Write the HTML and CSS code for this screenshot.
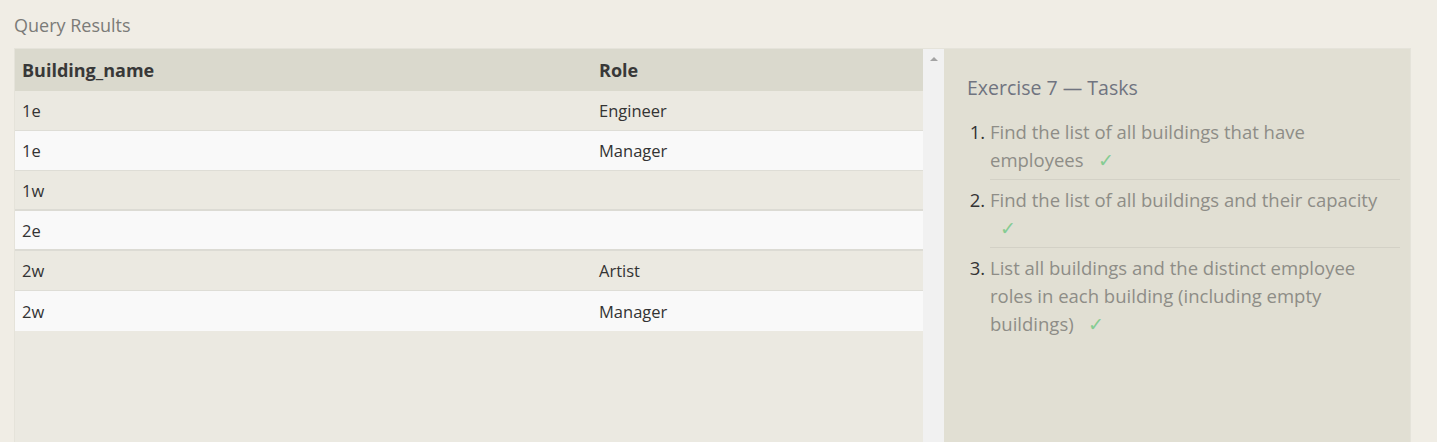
FILE: index.html
```html
<!DOCTYPE html>
<html>
<head>
<meta charset="utf-8">
<link rel="stylesheet" href="styles.css">
</head>
<body>
<div class="page">
  <div class="heading">Query Results</div>
  <div class="results">
    <div class="table-area">
      <table class="grid">
        <thead>
          <tr><th class="c1">Building_name</th><th>Role</th></tr>
        </thead>
        <tbody>
          <tr class="odd"><td>1e</td><td>Engineer</td></tr>
          <tr class="even"><td>1e</td><td>Manager</td></tr>
          <tr class="odd thick"><td>1w</td><td></td></tr>
          <tr class="even thick"><td>2e</td><td></td></tr>
          <tr class="odd"><td>2w</td><td>Artist</td></tr>
          <tr class="even last"><td>2w</td><td>Manager</td></tr>
        </tbody>
      </table>
      <div class="scrollbar"><span class="arrow"></span></div>
    </div>
    <div class="tasks">
      <div class="tasks-title">Exercise 7 — Tasks</div>
      <ol class="task-list">
        <li>Find the list of all buildings that have employees <span class="check">✓</span></li>
        <li>Find the list of all buildings and their capacity <span class="check">✓</span></li>
        <li>List all buildings and the distinct employee roles in each building (including empty buildings) <span class="check">✓</span></li>
      </ol>
    </div>
  </div>
</div>
</body>
</html>
```
FILE: styles.css
```css
html, body {
  margin: 0;
  padding: 0;
  background: #f0ede5;
  height: 100%;
  overflow: hidden;
}
.page {
  padding: 13px 26px 0 14px;
  font-family: "Open Sans", "Noto Sans", sans-serif;
}
.heading {
  font-size: 18px;
  line-height: 24px;
  color: #7b7b78;
  height: 35px;
}
.results {
  display: flex;
  border: 1px solid #e5e3da;
  border-bottom: none;
  height: 393px;
}
.table-area {
  display: flex;
  width: 929px;
  background: #ebe9e1;
}
.grid {
  width: 908px;
  border-collapse: collapse;
  align-self: flex-start;
  font-size: 16.5px;
  color: #333;
}
.grid th {
  background: #dad9cd;
  text-align: left;
  font-weight: 700;
  font-size: 18px;
  height: 42px;
  padding: 0 7px;
  color: #383838;
}
.grid th.c1 {
  width: 563px;
}
.grid td {
  height: 39px;
  padding: 0 7px;
  border-bottom: 1px solid #deddd6;
}
.grid tr.odd td { background: #ebe9e1; }
.grid tr.even td { background: #f9f9f9; }
.grid tr.thick td { border-bottom: 2px solid #dcdbd4; height: 38px; }
.grid tr.last td { border-bottom: none; height: 40px; }
.scrollbar {
  width: 21px;
  background: #f1f1f1;
  display: flex;
  justify-content: center;
  padding-top: 8px;
  box-sizing: border-box;
}
.arrow {
  width: 0;
  height: 0;
  border-left: 4px solid transparent;
  border-right: 4px solid transparent;
  border-bottom: 4px solid #a3a3a3;
}
.tasks {
  flex: 1;
  background: #e1dfd3;
  padding: 25px 10px 0 23px;
}
.tasks-title {
  font-size: 19.5px;
  line-height: 28px;
  color: #707480;
  margin-bottom: 16px;
}
.task-list {
  margin: 0;
  padding: 0 0 0 23px;
  font-size: 18.5px;
  line-height: 28px;
  color: #8e8d87;
}
.task-list li {
  padding: 0 0 5px 0;
  margin-bottom: 6px;
  border-bottom: 1px solid #d3d1c6;
}
.task-list li::marker {
  color: #333;
}
.task-list li:last-child {
  border-bottom: none;
}
.check {
  color: #85cc92;
  margin-left: 10px;
}
```
